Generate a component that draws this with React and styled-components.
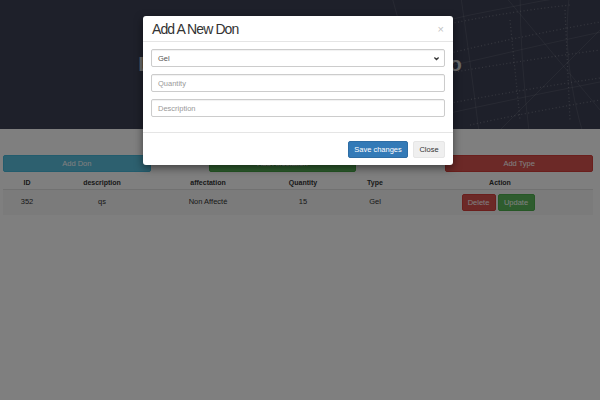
import React from 'react'
import styled, { createGlobalStyle } from 'styled-components'

const GlobalStyle = createGlobalStyle`
  html, body {
    margin: 0;
    padding: 0;
    background: #fff;
    font-family: "Liberation Sans", Arial, sans-serif;
    color: #333;
  }
  * { box-sizing: border-box; }
`

const Page = styled.div`
  position: relative;
  width: 600px;
  height: 400px;
  overflow: hidden;
  background: #fff;
`

const Hero = styled.header`
  position: relative;
  height: 129px;
  background: #3c4054;
  display: flex;
  align-items: center;
  justify-content: center;
  overflow: hidden;
`

const HeroArt = styled.svg`
  position: absolute;
  right: 0;
  top: 0;
`

const HeroTitle = styled.h1`
  position: relative;
  margin: 0;
  margin-top: -1px;
  font-size: 21px;
  font-weight: bold;
  color: #d4d4d4;
`

const Content = styled.main`
  padding: 26px 7px 0 3px;
`

const ButtonRow = styled.div`
  display: flex;
  align-items: center;
`

const WideButton = styled.button`
  width: 148px;
  height: 17px;
  margin-left: ${(p) => p.$offset || 0}px;
  border: 1px solid ${(p) => p.$border};
  border-radius: 2px;
  background: ${(p) => p.$bg};
  color: #fff;
  font-family: inherit;
  font-size: 7.5px;
  padding: 0;
`

const Table = styled.div`
  margin-top: 3px;
  display: grid;
  grid-template-columns: 48px 102px 110px 80px 64px 1fr;
`

const HeadCell = styled.div`
  height: 14px;
  display: flex;
  align-items: center;
  justify-content: center;
  font-size: 7px;
  font-weight: bold;
  color: #333;
`

const Cell = styled.div`
  height: 26px;
  display: flex;
  align-items: center;
  justify-content: center;
  gap: 2px;
  border-top: 1px solid #e2e2e2;
  background: #f6f6f6;
  font-size: 7.5px;
  color: #333;
  padding-bottom: 3px;
  padding-right: ${(p) => p.$shift || 0}px;
`

const SmallButton = styled.button`
  height: 17px;
  width: ${(p) => p.$w}px;
  border: 1px solid ${(p) => p.$border};
  border-radius: 2px;
  background: ${(p) => p.$bg};
  color: #fff;
  font-family: inherit;
  font-size: 7.5px;
  padding: 0;
  margin-top: 3px;
`

const Backdrop = styled.div`
  position: absolute;
  inset: 0;
  background: rgba(0, 0, 0, 0.5);
`

const Modal = styled.div`
  position: absolute;
  left: 143px;
  top: 16px;
  width: 310px;
  background: #fff;
  border-radius: 3px;
  box-shadow: 0 3px 9px rgba(0, 0, 0, 0.5);
`

const ModalHeader = styled.div`
  height: 26px;
  padding: 0 9px 0 9px;
  display: flex;
  align-items: center;
  justify-content: space-between;
  border-bottom: 1px solid #e5e5e5;
`

const ModalTitle = styled.h4`
  margin: 0;
  font-size: 14px;
  font-weight: normal;
  letter-spacing: -0.9px;
  color: #333;
`

const CloseX = styled.span`
  font-size: 11px;
  color: #c4c4c4;
  line-height: 1;
  margin-top: 2px;
`

const ModalBody = styled.div`
  padding: 7px 8px 15px 8px;
  display: flex;
  flex-direction: column;
  gap: 7px;
`

const Field = styled.div`
  height: 18px;
  border: 1px solid #ccc;
  border-radius: 2px;
  display: flex;
  align-items: center;
  justify-content: space-between;
  padding: 0 4px 0 6px;
  font-size: 7.5px;
  color: ${(p) => (p.$placeholder ? '#999' : '#555')};
  box-shadow: inset 0 1px 1px rgba(0, 0, 0, 0.06);
`

const ModalFooter = styled.div`
  border-top: 1px solid #e5e5e5;
  padding: 8px 8px 7px 8px;
  display: flex;
  justify-content: flex-end;
  gap: 5px;
`

const FooterButton = styled.button`
  height: 17px;
  width: ${(p) => p.$w}px;
  border: 1px solid ${(p) => p.$border};
  border-radius: 2px;
  background: ${(p) => p.$bg};
  color: ${(p) => p.$color};
  font-family: inherit;
  font-size: 7.5px;
  padding: 0;
`

const GlobeArt = () => (
  <HeroArt width="230" height="129" viewBox="0 0 230 129">
    <g fill="none" stroke="rgba(255,255,255,0.13)" strokeWidth="0.8">
      <path d="M-40 50 Q 100 10 240 -10" />
      <path d="M-60 100 Q 100 60 240 30" />
      <path d="M-40 140 Q 110 105 240 80" />
      <path d="M20 -10 Q 40 60 60 140" />
      <path d="M90 -10 Q 100 60 110 140" />
      <path d="M150 -10 Q 150 60 160 140" />
      <path d="M200 -10 Q 190 60 215 140" />
      <path d="M240 20 L 120 140" />
      <path d="M130 -10 L 230 110" />
    </g>
    <g fill="none" stroke="rgba(255,255,255,0.25)" strokeWidth="1.2" strokeDasharray="1 2.5">
      <path d="M30 35 Q 110 15 200 5" />
      <path d="M60 58 Q 140 38 230 22" />
      <path d="M40 80 Q 120 65 230 50" />
      <path d="M70 105 Q 150 90 230 78" />
      <path d="M100 125 Q 160 112 230 100" />
      <path d="M140 20 L 150 120" />
      <path d="M195 10 L 200 120" />
    </g>
  </HeroArt>
)

const ChevronDown = () => (
  <svg width="7" height="7" viewBox="0 0 10 10">
    <path d="M2 3.5 L5 6.5 L8 3.5" fill="none" stroke="#333" strokeWidth="1.8" />
  </svg>
)

export default function App() {
  return (
    <Page>
      <GlobalStyle />
      <Hero>
        <GlobeArt />
        <HeroTitle>Liste Des Dons Au Dépôt Centro</HeroTitle>
      </Hero>
      <Content>
        <ButtonRow>
          <WideButton $bg="#5bc0de" $border="#46b8da">Add Don</WideButton>
          <WideButton $bg="#5cb85c" $border="#4cae4c" $offset={58}>Add Affectation</WideButton>
          <WideButton $bg="#d9534f" $border="#d43f3a" $offset={89}>Add Type</WideButton>
        </ButtonRow>
        <Table>
          <HeadCell>ID</HeadCell>
          <HeadCell>description</HeadCell>
          <HeadCell>affectation</HeadCell>
          <HeadCell>Quantity</HeadCell>
          <HeadCell>Type</HeadCell>
          <HeadCell>Action</HeadCell>
          <Cell>352</Cell>
          <Cell>qs</Cell>
          <Cell>Non Affecté</Cell>
          <Cell>15</Cell>
          <Cell>Gel</Cell>
          <Cell $shift={4}>
            <SmallButton $w={34} $bg="#d9534f" $border="#d43f3a">Delete</SmallButton>
            <SmallButton $w={37} $bg="#5cb85c" $border="#4cae4c">Update</SmallButton>
          </Cell>
        </Table>
      </Content>
      <Backdrop />
      <Modal>
        <ModalHeader>
          <ModalTitle>Add A New Don</ModalTitle>
          <CloseX>×</CloseX>
        </ModalHeader>
        <ModalBody>
          <Field>
            Gel
            <ChevronDown />
          </Field>
          <Field $placeholder>Quantity</Field>
          <Field $placeholder>Description</Field>
        </ModalBody>
        <ModalFooter>
          <FooterButton $w={60} $bg="#337ab7" $border="#2e6da4" $color="#fff">Save changes</FooterButton>
          <FooterButton $w={32} $bg="#efefef" $border="#e6e6e6" $color="#333">Close</FooterButton>
        </ModalFooter>
      </Modal>
    </Page>
  )
}
